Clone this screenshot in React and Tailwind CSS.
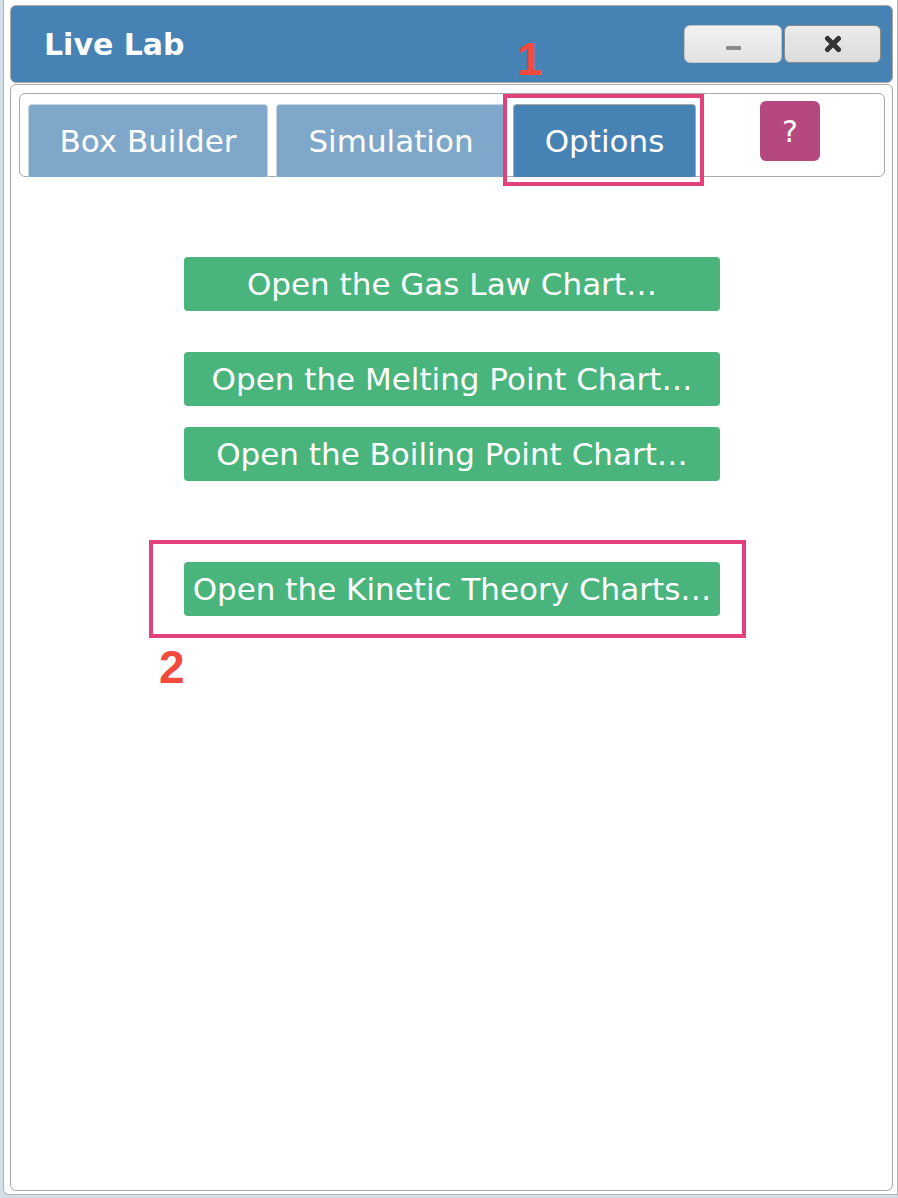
import React from 'react';

const font = { fontFamily: '"DejaVu Sans", Verdana, sans-serif' };

const charts = [
  { label: 'Open the Gas Law Chart…', mt: 'mt-[80px]' },
  { label: 'Open the Melting Point Chart…', mt: 'mt-[41px]' },
  { label: 'Open the Boiling Point Chart…', mt: 'mt-[21px]' },
  { label: 'Open the Kinetic Theory Charts…', mt: 'mt-[81px]' },
];

function Tab({ label, active, width }) {
  return (
    <div
      className={`h-[73px] flex items-center justify-center rounded-t-[4px] border border-b-0 text-[31px] text-white ${
        active ? 'bg-[#4682b4] border-[#a9a9a9]' : 'bg-[#7fa7c9] border-[#c8d4de]'
      }`}
      style={{ width }}
    >
      {label}
    </div>
  );
}

export default function App() {
  return (
    <div className="relative w-[898px] h-[1198px] overflow-hidden bg-[#d3e0ea]" style={font}>
      <div className="ml-[3px] w-[895px] h-[1195px] bg-white border-l border-r border-b border-[#b4b4b4] rounded-bl-[6px] pl-[6px] pr-[4px] pt-[5px] flex flex-col">
        {/* title bar */}
        <div className="h-[78px] shrink-0 bg-[#4682b4] border border-[#a9a9a9] rounded-[6px] flex items-center pl-[33px] pr-[11px]">
          <span className="text-[30px] font-bold text-white">Live Lab</span>
          <div className="ml-auto flex gap-[2px]">
            <button className="w-[98px] h-[38px] rounded-[6px] border border-[#c4c4c4] bg-gradient-to-b from-[#f2f2f2] to-[#e2e2e2] flex items-center justify-center">
              <span className="block w-[15px] h-[4px] rounded-[1px] bg-[#8a8a8a] mt-[8px]" />
            </button>
            <button className="w-[97px] h-[38px] rounded-[6px] border border-[#8c8c8c] bg-gradient-to-b from-[#ebebeb] to-[#dcdcdc] flex items-center justify-center">
              <svg width="18" height="18" viewBox="0 0 18 18">
                <path d="M3.5 3.5 L14.5 14.5 M14.5 3.5 L3.5 14.5" stroke="#333333" strokeWidth="5" strokeLinecap="round" />
              </svg>
            </button>
          </div>
        </div>

        {/* content panel */}
        <div className="mt-[1px] flex-1 border border-[#a9a9a9] rounded-[6px] px-[8px] pr-[7px] pt-[8px] mb-[3px] flex flex-col">
          <div className="h-[84px] shrink-0 border border-[#a9a9a9] rounded-[6px] flex items-end pl-[8px]">
            <div className="flex items-end gap-[8px] -mb-px">
              <Tab label="Box Builder" width={240} />
              <Tab label="Simulation" width={230} />
              <div className="-ml-px">
                <Tab label="Options" active width={183} />
              </div>
            </div>
            <div className="self-start mt-[7px] ml-[64px] w-[60px] h-[60px] rounded-[6px] bg-[#b5487f] flex items-center justify-center text-white text-[30px]">
              ?
            </div>
          </div>

          <div className="flex flex-col items-center">
            {charts.map((c) => (
              <button
                key={c.label}
                className={`${c.mt} w-[536px] h-[54px] rounded-[4px] bg-[#49b47b] text-white text-[31px] flex items-center justify-center whitespace-nowrap`}
              >
                {c.label}
              </button>
            ))}
          </div>
        </div>
      </div>

      {/* annotation overlays */}
      <div className="absolute left-[503px] top-[94px] w-[201px] h-[92px] border-[4px] border-[#e2417b]" />
      <div className="absolute left-[149px] top-[540px] w-[597px] h-[98px] border-[4px] border-[#e2417b]" />
      <div
        className="absolute left-[517px] top-[36px] text-[46px] font-bold text-[#f24a3c] leading-none"
        style={{ fontFamily: '"Liberation Sans", Arial, sans-serif' }}
      >
        1
      </div>
      <div
        className="absolute left-[159px] top-[644px] text-[46px] font-bold text-[#f24a3c] leading-none"
        style={{ fontFamily: '"Liberation Sans", Arial, sans-serif' }}
      >
        2
      </div>
    </div>
  );
}
